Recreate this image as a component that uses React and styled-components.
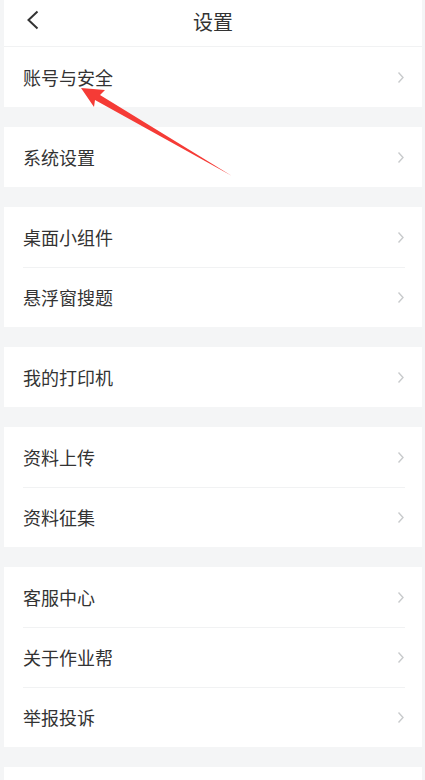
import styled, {createGlobalStyle} from 'styled-components'

const Global = createGlobalStyle`
  html, body {
    margin: 0;
    padding: 0;
    background: #f4f5f6;
  }
  body {
    font-family: "Noto Sans CJK SC", "Noto Sans", sans-serif;
  }
`

const groups = [
  ['账号与安全'],
  ['系统设置'],
  ['桌面小组件', '悬浮窗搜题'],
  ['我的打印机'],
  ['资料上传', '资料征集'],
  ['客服中心', '关于作业帮', '举报投诉'],
]

function Chevron() {
  return (
    <svg width="8" height="13" viewBox="0 0 8 13">
      <path d="M1.5 1.5 L6 6.5 L1.5 11.5" fill="none" stroke="#c9cbcd" strokeWidth="1.4" />
    </svg>
  )
}

function App() {
  return (
    <>
      <Global />
      <Page>
        <Header>
          <Back>
            <svg width="14" height="20" viewBox="0 0 14 20">
              <path d="M11.5 1.5 L2.5 10 L11.5 18.5" fill="none" stroke="#333" strokeWidth="2" />
            </svg>
          </Back>
          <Title>设置</Title>
        </Header>
        {groups.map((g, i) => (
          <Group key={i}>
            {g.map((label, j) => (
              <Row key={label} $first={j === 0}>
                <Label>{label}</Label>
                <Chevron />
              </Row>
            ))}
          </Group>
        ))}
        <Tail />
        <Arrow width="160" height="100" viewBox="0 0 160 100">
          <polygon points="1,8 25,10 20,15 152,96 15,20 14,27" fill="#f53b36" />
        </Arrow>
      </Page>
    </>
  )
}

const Page = styled.div`
  position: relative;
  margin: 0 3px 0 4px;
  min-height: 780px;
  display: flex;
  flex-direction: column;
  gap: 20px;
`

const Header = styled.div`
  box-sizing: border-box;
  height: 47px;
  background: #fff;
  border-bottom: 1px solid #f1f2f3;
  display: flex;
  align-items: center;
  justify-content: center;
  position: relative;
  margin-bottom: -20px;
`

const Back = styled.div`
  position: absolute;
  left: 22px;
  top: 10px;
`

const Title = styled.div`
  font-size: 20px;
  color: #333;
  margin-top: -4px;
`

const Group = styled.div`
  background: #fff;
  padding: 0 17px 0 19px;
`

const Row = styled.div`
  box-sizing: border-box;
  height: 60px;
  display: flex;
  align-items: center;
  justify-content: space-between;
  border-top: ${p => (p.$first ? 'none' : '1px solid #f1f2f3')};
`

const Label = styled.span`
  font-size: 18px;
  color: #333;
  margin-top: -1px;
`

const Tail = styled.div`
  background: #fff;
  flex: 1;
`

const Arrow = styled.svg`
  position: absolute;
  left: 76px;
  top: 80px;
`

export default App
